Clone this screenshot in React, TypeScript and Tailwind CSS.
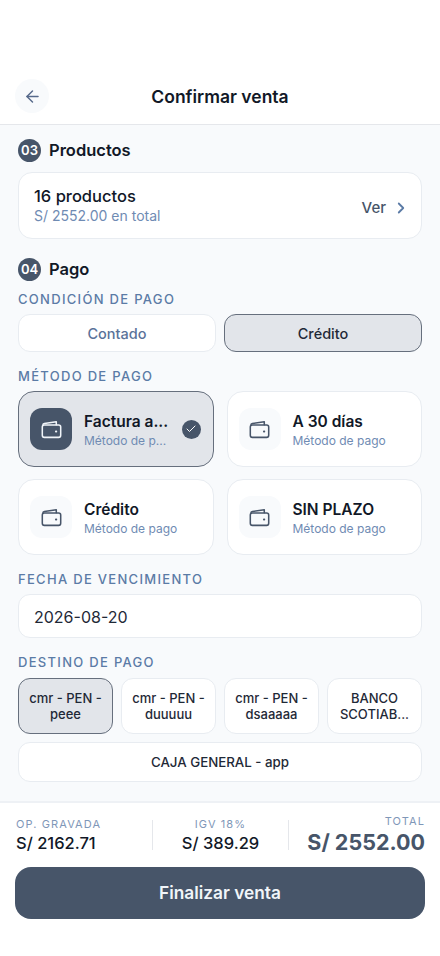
import React from "react";
import { ArrowLeft, ChevronRight, Check } from "lucide-react";

const font = { fontFamily: "Inter, sans-serif" };

function WalletIcon({ active }: { active?: boolean }) {
  const c = active ? "#f1f5f9" : "#475569";
  return (
    <svg width="23" height="23" viewBox="0 0 24 24" fill="none" stroke={c} strokeWidth="1.6" strokeLinecap="round" strokeLinejoin="round">
      <path d="M3 7.6c0-.9.7-1.6 1.6-1.8L17 4v3" />
      <rect x="2.4" y="7.2" width="19.2" height="13" rx="2.2" />
      <path d="M16.6 14h.4" strokeWidth="2" />
    </svg>
  );
}

function Section({ n, title }: { n: string; title: string }) {
  return (
    <div className="flex items-center gap-[8px]">
      <div className="w-[23px] h-[23px] rounded-full bg-[#475569] text-white text-[13px] font-semibold flex items-center justify-center">{n}</div>
      <div className="text-[16.5px] leading-[21px] font-semibold text-[#111827]">{title}</div>
    </div>
  );
}

function Label({ children }: { children: React.ReactNode }) {
  return <div className="text-[13px] leading-[16px] font-medium tracking-[1.3px] text-[#5b7ba6]">{children}</div>;
}

function Method({ title, active, check }: { title: string; active?: boolean; check?: boolean }) {
  return (
    <div className={`h-[76px] rounded-[16px] border flex items-center pl-[11px] pr-[12px] ${active ? "bg-[#e2e5ea] border-[#666f7d]" : "bg-white border-[#e8ecf1]"}`}>
      <div className={`w-[42px] h-[42px] shrink-0 rounded-[12px] flex items-center justify-center ${active ? "bg-[#475569]" : "bg-[#f8fafc]"}`}>
        <WalletIcon active={active} />
      </div>
      <div className="ml-[12px] flex-1 min-w-0 pt-[2px]">
        <div className="text-[15.5px] leading-[20px] font-semibold text-[#111827] whitespace-nowrap">{title}</div>
        <div className="text-[12px] leading-[17px] text-[#6f8bb3] whitespace-nowrap">{active ? "Método de p..." : "Método de pago"}</div>
      </div>
      {check && (
        <div className="w-[19px] h-[19px] shrink-0 rounded-full bg-[#475569] flex items-center justify-center">
          <Check size={12} color="#ffffff" strokeWidth={2} />
        </div>
      )}
    </div>
  );
}

function Chip({ lines, active }: { lines: string[]; active?: boolean }) {
  return (
    <div className={`h-[56px] rounded-[12px] border flex flex-col items-center justify-center text-[13px] leading-[16px] font-medium text-[#1f2937] ${active ? "bg-[#e2e5ea] border-[#666f7d]" : "bg-white border-[#e8ecf1]"}`}>
      {lines.map((l) => (
        <div key={l} className="whitespace-nowrap">{l}</div>
      ))}
    </div>
  );
}

export default function App() {
  return (
    <div className="h-[956px] w-[440px] bg-white flex flex-col overflow-hidden" style={font}>
      <header className="h-[125px] shrink-0 bg-white border-b border-[#e5e7eb] relative flex items-end justify-center pb-[16px]">
        <div className="absolute left-[15px] top-[79px] w-[34px] h-[34px] rounded-full bg-[#f8fafc] flex items-center justify-center">
          <ArrowLeft size={19} color="#56698a" strokeWidth={1.8} />
        </div>
        <div className="text-[17.5px] leading-[22px] font-semibold text-[#111827]">Confirmar venta</div>
      </header>

      <main className="flex-1 bg-[#f8fafc] px-[18px] pt-[14px]">
        <Section n="03" title="Productos" />
        <div className="mt-[10px] h-[67px] rounded-[14px] bg-white border border-[#e8ecf1] flex items-center justify-between pl-[15px] pr-[11px]">
          <div className="pb-[1px]">
            <div className="text-[16.5px] leading-[22px] font-medium text-[#111827]">16 productos</div>
            <div className="text-[14px] leading-[18px] text-[#6f8bb3]">S/ 2552.00 en total</div>
          </div>
          <div className="flex items-center gap-[6px] mt-[5px]">
            <span className="text-[15px] font-medium text-[#475569]">Ver</span>
            <ChevronRight size={18} color="#5b7ba6" strokeWidth={2.4} />
          </div>
        </div>

        <div className="mt-[19px]"><Section n="04" title="Pago" /></div>
        <div className="mt-[10px]"><Label>CONDICIÓN DE PAGO</Label></div>
        <div className="mt-[7px] grid grid-cols-2 gap-[8px]">
          <div className="h-[38px] pt-[2px] rounded-[12px] bg-white border border-[#e8ecf1] flex items-center justify-center text-[14.5px] font-medium text-[#5a7299]">Contado</div>
          <div className="h-[38px] pt-[2px] rounded-[12px] bg-[#e2e5ea] border border-[#666f7d] flex items-center justify-center text-[14.5px] font-medium text-[#1f2937]">Crédito</div>
        </div>

        <div className="mt-[16px]"><Label>MÉTODO DE PAGO</Label></div>
        <div className="mt-[7px] grid grid-cols-2 gap-x-[13px] gap-y-[12px]">
          <Method title="Factura a..." active check />
          <Method title="A 30 días" />
          <Method title="Crédito" />
          <Method title="SIN PLAZO" />
        </div>

        <div className="mt-[16px]"><Label>FECHA DE VENCIMIENTO</Label></div>
        <div className="mt-[7px] h-[44px] pt-[2px] rounded-[12px] bg-white border border-[#e8ecf1] flex items-center pl-[15px] text-[16px] text-[#1f2937]">2026-08-20</div>

        <div className="mt-[16px]"><Label>DESTINO DE PAGO</Label></div>
        <div className="mt-[8px] grid grid-cols-4 gap-[8px]">
          <Chip lines={["cmr - PEN -", "peee"]} active />
          <Chip lines={["cmr - PEN -", "duuuuu"]} />
          <Chip lines={["cmr - PEN -", "dsaaaaa"]} />
          <Chip lines={["BANCO", "SCOTIAB..."]} />
        </div>
        <div className="mt-[8px] h-[40px] pt-[2px] rounded-[12px] bg-white border border-[#e8ecf1] flex items-center justify-center text-[13.3px] font-medium text-[#1f2937]">CAJA GENERAL - app</div>
      </main>

      <footer className="h-[155px] shrink-0 bg-white border-t-2 border-[#eef1f5] px-[15px] pt-[14px]">
        <div className="flex items-center h-[36px]">
          <div className="w-[137px] pl-[1px]">
            <div className="text-[11px] leading-[14px] tracking-[1.1px] text-[#7f97b8]">OP. GRAVADA</div>
            <div className="mt-[2px] text-[16.5px] leading-[20px] font-medium text-[#111827]">S/ 2162.71</div>
          </div>
          <div className="w-px h-[30px] shrink-0 bg-[#e5e7eb]" />
          <div className="w-[135px] text-center">
            <div className="text-[11px] leading-[14px] tracking-[1.1px] text-[#7f97b8]">IGV 18%</div>
            <div className="mt-[2px] text-[16.5px] leading-[20px] font-medium text-[#111827]">S/ 389.29</div>
          </div>
          <div className="w-px h-[30px] shrink-0 bg-[#e5e7eb]" />
          <div className="flex-1 text-right">
            <div className="text-[11px] leading-[14px] tracking-[1.1px] text-[#7f97b8]">TOTAL</div>
            <div className="text-[21.5px] leading-[28px] font-bold text-[#475569] whitespace-nowrap">S/ 2552.00</div>
          </div>
        </div>
        <div className="mt-[14px] h-[52px] rounded-[16px] bg-[#475569] flex items-center justify-center text-[17.3px] font-semibold text-[#f1f5f9]">Finalizar venta</div>
      </footer>
    </div>
  );
}
